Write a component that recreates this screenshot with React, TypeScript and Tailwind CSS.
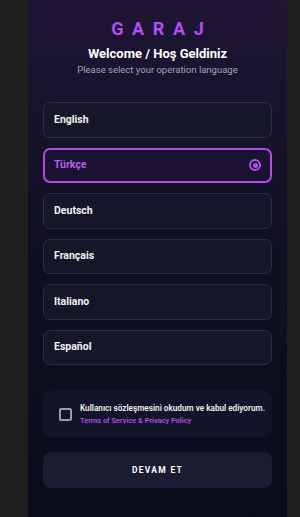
import React, { useState } from "react";

const languages = [
  { code: "en", label: "English" },
  { code: "tr", label: "Türkçe" },
  { code: "de", label: "Deutsch" },
  { code: "fr", label: "Français" },
  { code: "it", label: "Italiano" },
  { code: "es", label: "Español" },
];

const App = () => {
  const [selected, setSelected] = useState("tr");
  const [accepted, setAccepted] = useState(false);

  return (
    <div className="min-h-[517px] w-full bg-[#1e1e1e] font-['Roboto',sans-serif]">
      <div className="ml-[28px] w-[259px] min-h-[517px] bg-gradient-to-b from-[#1e1534] via-[#0f0f22] to-[#0a0c1a] px-[15px] pt-[17px] pb-[30px]">
        <div className="flex flex-col items-center">
          <h1 className="text-[18px] leading-[24px] font-bold tracking-[0.48em] mr-[-0.48em] text-[#b24ef0]">
            GARAJ
          </h1>
          <h2 className="mt-[4px] text-[13px] leading-[18px] font-bold text-white">
            Welcome / Hoş Geldiniz
          </h2>
          <p className="mt-[1px] text-[9.5px] leading-[12px] text-[#a3a3b3]">
            Please select your operation language
          </p>
        </div>

        <div className="mt-[26px] flex flex-col gap-[10px]">
          {languages.map((lang) => {
            const active = lang.code === selected;
            return (
              <button
                key={lang.code}
                onClick={() => setSelected(lang.code)}
                className={`flex h-[35.5px] w-full items-center justify-between rounded-[7px] px-[10px] text-left ${
                  active
                    ? "border-2 border-[#b04ee8] bg-[#1a1230]"
                    : "border border-[#2c2c42] bg-[#161629]"
                }`}
              >
                <span
                  className={`text-[10.5px] font-bold ${
                    active ? "text-[#b65cf0] ml-[-1px]" : "text-[#f2f2f2]"
                  }`}
                >
                  {lang.label}
                </span>
                {active && (
                  <span className="mr-[-1px] flex h-[12px] w-[12px] items-center justify-center rounded-full border-2 border-[#b04ee8]">
                    <span className="h-[5px] w-[5px] rounded-full bg-[#b04ee8]" />
                  </span>
                )}
              </button>
            );
          })}
        </div>

        <div className="mt-[26px] flex h-[46px] items-center gap-[8px] rounded-[8px] bg-[#13142a] pl-[16px] pr-[6px]">
          <button
            onClick={() => setAccepted(!accepted)}
            className="flex h-[13px] w-[13px] shrink-0 items-center justify-center rounded-[2px] border-2 border-[#9b9ba6]"
          >
            {accepted && <span className="h-[5px] w-[5px] bg-[#b04ee8]" />}
          </button>
          <div className="flex flex-col gap-[4px]">
            <span className="text-[8.2px] leading-[10px] font-semibold text-[#f0f0f0] whitespace-nowrap">
              Kullanıcı sözleşmesini okudum ve kabul ediyorum.
            </span>
            <span className="text-[7.4px] leading-[8px] font-semibold text-[#b04ee8]">
              Terms of Service &amp; Privacy Policy
            </span>
          </div>
        </div>

        <button className="mt-[15px] flex h-[36px] w-full items-center justify-center rounded-[8px] bg-[#1b1b31]">
          <span className="text-[8.5px] font-bold tracking-[0.15em] text-white">
            DEVAM ET
          </span>
        </button>
      </div>
    </div>
  );
};

export default App;
